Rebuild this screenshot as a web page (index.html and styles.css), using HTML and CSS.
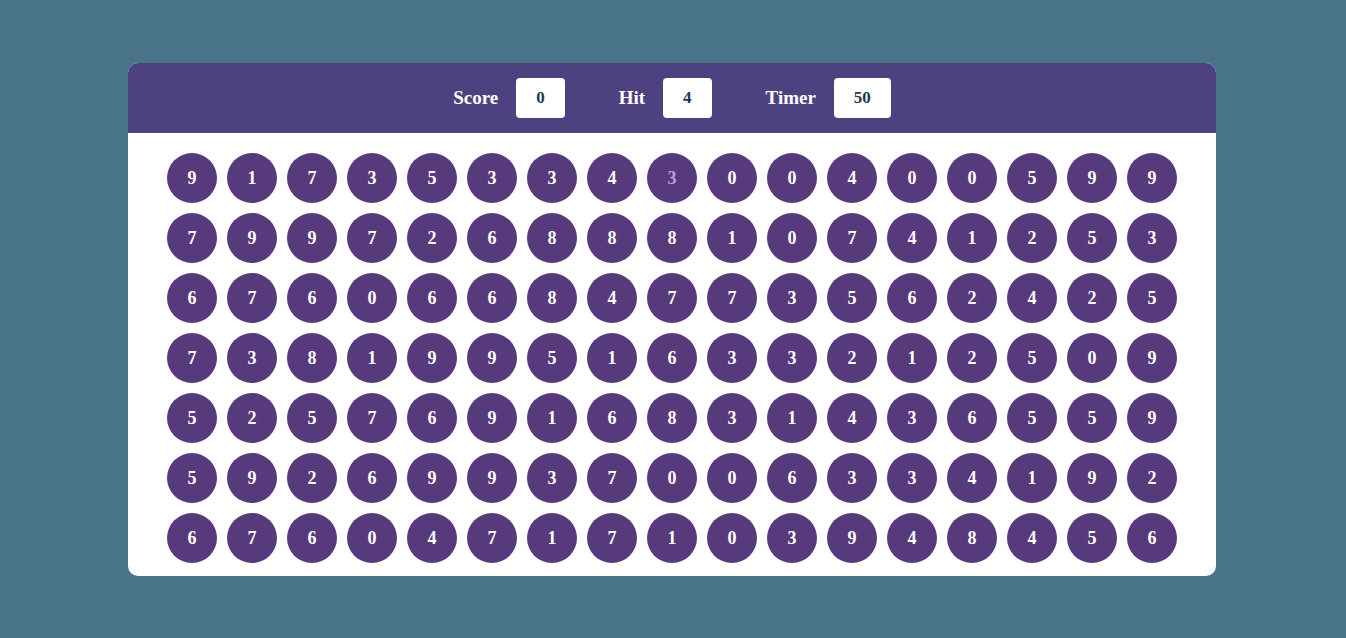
FILE: index.html
```html
<!DOCTYPE html>
<html lang="en">
<head>
    <meta charset="UTF-8">
    <title>Bubble Game</title>
    <link rel="stylesheet" href="styles.css">
</head>
<body>
    <div class="panel">
        <div class="top">
            <div class="elem">
                <h2>Score</h2>
                <div class="box" id="score">0</div>
            </div>
            <div class="elem">
                <h2>Hit</h2>
                <div class="box" id="hit">4</div>
            </div>
            <div class="elem">
                <h2>Timer</h2>
                <div class="box" id="timer">50</div>
            </div>
        </div>
        <div class="bottom" id="bottom"></div>
    </div>

    <script>
        const rows = [
            "91735334300400599",
            "79972688810741253",
            "67606684773562425",
            "73819951633212509",
            "52576916831436559",
            "59269937006334192",
            "67604717103948456"
        ];
        let html = '';
        rows.forEach(function(row, r) {
            for (let c = 0; c < row.length; c++) {
                // the one the player hovered
                const cls = (r === 0 && c === 8) ? 'bubble active' : 'bubble';
                html += `<div class="${cls}">${row[c]}</div>`;
            }
        });
        document.getElementById('bottom').innerHTML = html;
    </script>
</body>
</html>
```

FILE: styles.css
```css
* { margin: 0; padding: 0; box-sizing: border-box; }
html, body { height: 100%; }
body { background-color: #497387; font-family: "Liberation Serif", "Times New Roman", serif; padding-top: 63px; }
.panel { width: 1088px; height: 513px; margin-left: 128px; background: #fff; border-radius: 10px; overflow: hidden; }
.top { height: 70px; background-color: #4e4180; display: flex; justify-content: center; align-items: center; gap: 54px; }
.elem { display: flex; align-items: center; gap: 18px; }
.elem h2 { color: #fff; font-size: 19px; font-weight: bold; }
.box { height: 40px; padding: 0 20px; background: #fff; border-radius: 4px; color: #1d3a4f; font-size: 17px; font-weight: bold; display: flex; align-items: center; justify-content: center; }
.bottom { display: flex; flex-wrap: wrap; gap: 10px; padding: 20px 39px 0; }
.bubble { width: 50px; height: 50px; border-radius: 50%; background-color: #563a7b; color: #fff; font-size: 18px; font-weight: bold; display: flex; align-items: center; justify-content: center; }
.bubble.active { color: #c796e6; }
```
